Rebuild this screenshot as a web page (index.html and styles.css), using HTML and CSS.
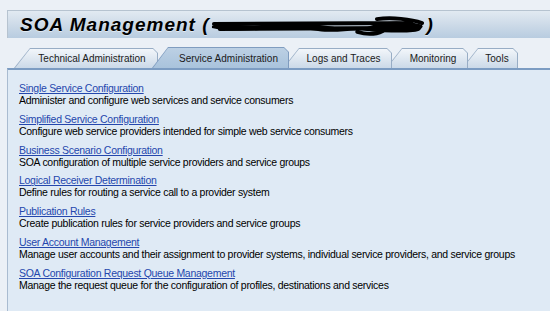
FILE: index.html
```html
<!DOCTYPE html>
<html>
<head>
<meta charset="utf-8">
<link rel="stylesheet" href="styles.css">
</head>
<body>
<div class="page">
  <div class="titlebar">
    <h1 class="title">SOA Management (<svg class="redact" width="216" height="22" viewBox="0 0 220 22"><path d="M2 12 C20 8 40 14 60 10 S100 9 120 12 S150 16 160 13 S180 6 200 8 S218 12 214 16 S180 19 160 17 S130 20 110 17 S70 15 50 16 S15 17 2 14 Z" fill="#000"/><path d="M4 10 L205 9 M10 15 L195 14 M150 18 C160 21 170 20 176 17 M170 5 C185 3 205 5 216 9" stroke="#000" stroke-width="4" fill="none" stroke-linecap="round"/></svg>)</h1>
  </div>
  <div class="tabs">
    <div class="tab t1"><div class="tab-in">Technical Administration</div></div>
    <div class="tab t2 active"><div class="tab-in">Service Administration</div></div>
    <div class="tab t3"><div class="tab-in">Logs and Traces</div></div>
    <div class="tab t4"><div class="tab-in">Monitoring</div></div>
    <div class="tab t5"><div class="tab-in">Tools</div></div>
  </div>
  <div class="panel">
    <div class="item"><a class="link" href="#">Single Service Configuration</a><div class="desc">Administer and configure web services and service consumers</div></div>
    <div class="item"><a class="link" href="#">Simplified Service Configuration</a><div class="desc">Configure web service providers intended for simple web service consumers</div></div>
    <div class="item"><a class="link" href="#">Business Scenario Configuration</a><div class="desc">SOA configuration of multiple service providers and service groups</div></div>
    <div class="item"><a class="link" href="#">Logical Receiver Determination</a><div class="desc">Define rules for routing a service call to a provider system</div></div>
    <div class="item"><a class="link" href="#">Publication Rules</a><div class="desc">Create publication rules for service providers and service groups</div></div>
    <div class="item"><a class="link" href="#">User Account Management</a><div class="desc">Manage user accounts and their assignment to provider systems, individual service providers, and service groups</div></div>
    <div class="item"><a class="link" href="#">SOA Configuration Request Queue Management</a><div class="desc">Manage the request queue for the configuration of profiles, destinations and services</div></div>
  </div>
</div>
</body>
</html>
```

FILE: styles.css
```css
html, body {
  margin: 0;
  padding: 0;
  background: #ebf0f6;
  width: 550px;
  height: 311px;
  overflow: hidden;
  font-family: "Liberation Sans", Arial, sans-serif;
}
.page {
  padding: 10px 0 0 7px;
  display: flex;
  flex-direction: column;
  height: 301px;
}
.titlebar {
  height: 28px;
  border-top: 1px solid #b6c3d0;
  border-left: 1px solid #b6c3d0;
  background: linear-gradient(#e2eaf2, #cbd9e7 55%, #b8cce0);
  display: flex;
  align-items: center;
  padding-left: 12px;
  box-sizing: border-box;
}
.title {
  margin: 0;
  font-size: 19px;
  font-weight: bold;
  font-style: italic;
  letter-spacing: 1px;
  color: #000;
  display: flex;
  align-items: center;
  white-space: nowrap;
  text-shadow: 0 1px 0 rgba(255,255,255,0.5);
}
.redact {
  margin: 0 1px 0 0;
}
.tabs {
  display: flex;
  margin-top: 9px;
  padding-left: 7px;
  height: 21px;
  align-items: flex-end;
}
.tab {
  height: 20px;
  background: #98adc5;
  clip-path: polygon(0 100%, 16px 0, calc(100% - 5px) 0, 100% 5px, 100% 100%);
  display: flex;
  margin-right: -6px;
}
.tab-in {
  flex: 1;
  margin: 1px 1px 0 1px;
  background: linear-gradient(#f2f6fa, #dbe5ef 60%, #cbd9e8);
  clip-path: polygon(0 100%, 15px 0, calc(100% - 4px) 0, 100% 4px, 100% 100%);
  font-size: 10px;
  color: #1a1a1a;
  display: flex;
  align-items: center;
  justify-content: center;
  padding-left: 12px;
  box-sizing: border-box;
}
.t1 { width: 144px; z-index: 1; }
.t2 { width: 137px; z-index: 5; }
.t3 { width: 109px; z-index: 4; }
.t4 { width: 82px; z-index: 3; }
.t5 { width: 56px; z-index: 2; }
.t2 .tab-in { padding-left: 16px; }
.t5 .tab-in { padding-left: 14px; }
.tab.active { background: #7f9cbf; height: 21px; }
.tab.active .tab-in {
  background: linear-gradient(#bcd0e4, #a9c3dc);
}
.panel {
  flex: 1;
  background: #dfeaf5;
  border-top: 2px solid #7c9cc2;
  border-left: 1px solid #a9bbd0;
  padding: 12px 0 0 11px;
  display: flex;
  flex-direction: column;
  gap: 6.83px;
}
.item {
  display: flex;
  flex-direction: column;
  font-size: 10.5px;
  letter-spacing: -0.28px;
  line-height: 12px;
}
.link {
  color: #2447ad;
  text-decoration: underline;
  align-self: flex-start;
}
.desc {
  color: #000;
}
```
